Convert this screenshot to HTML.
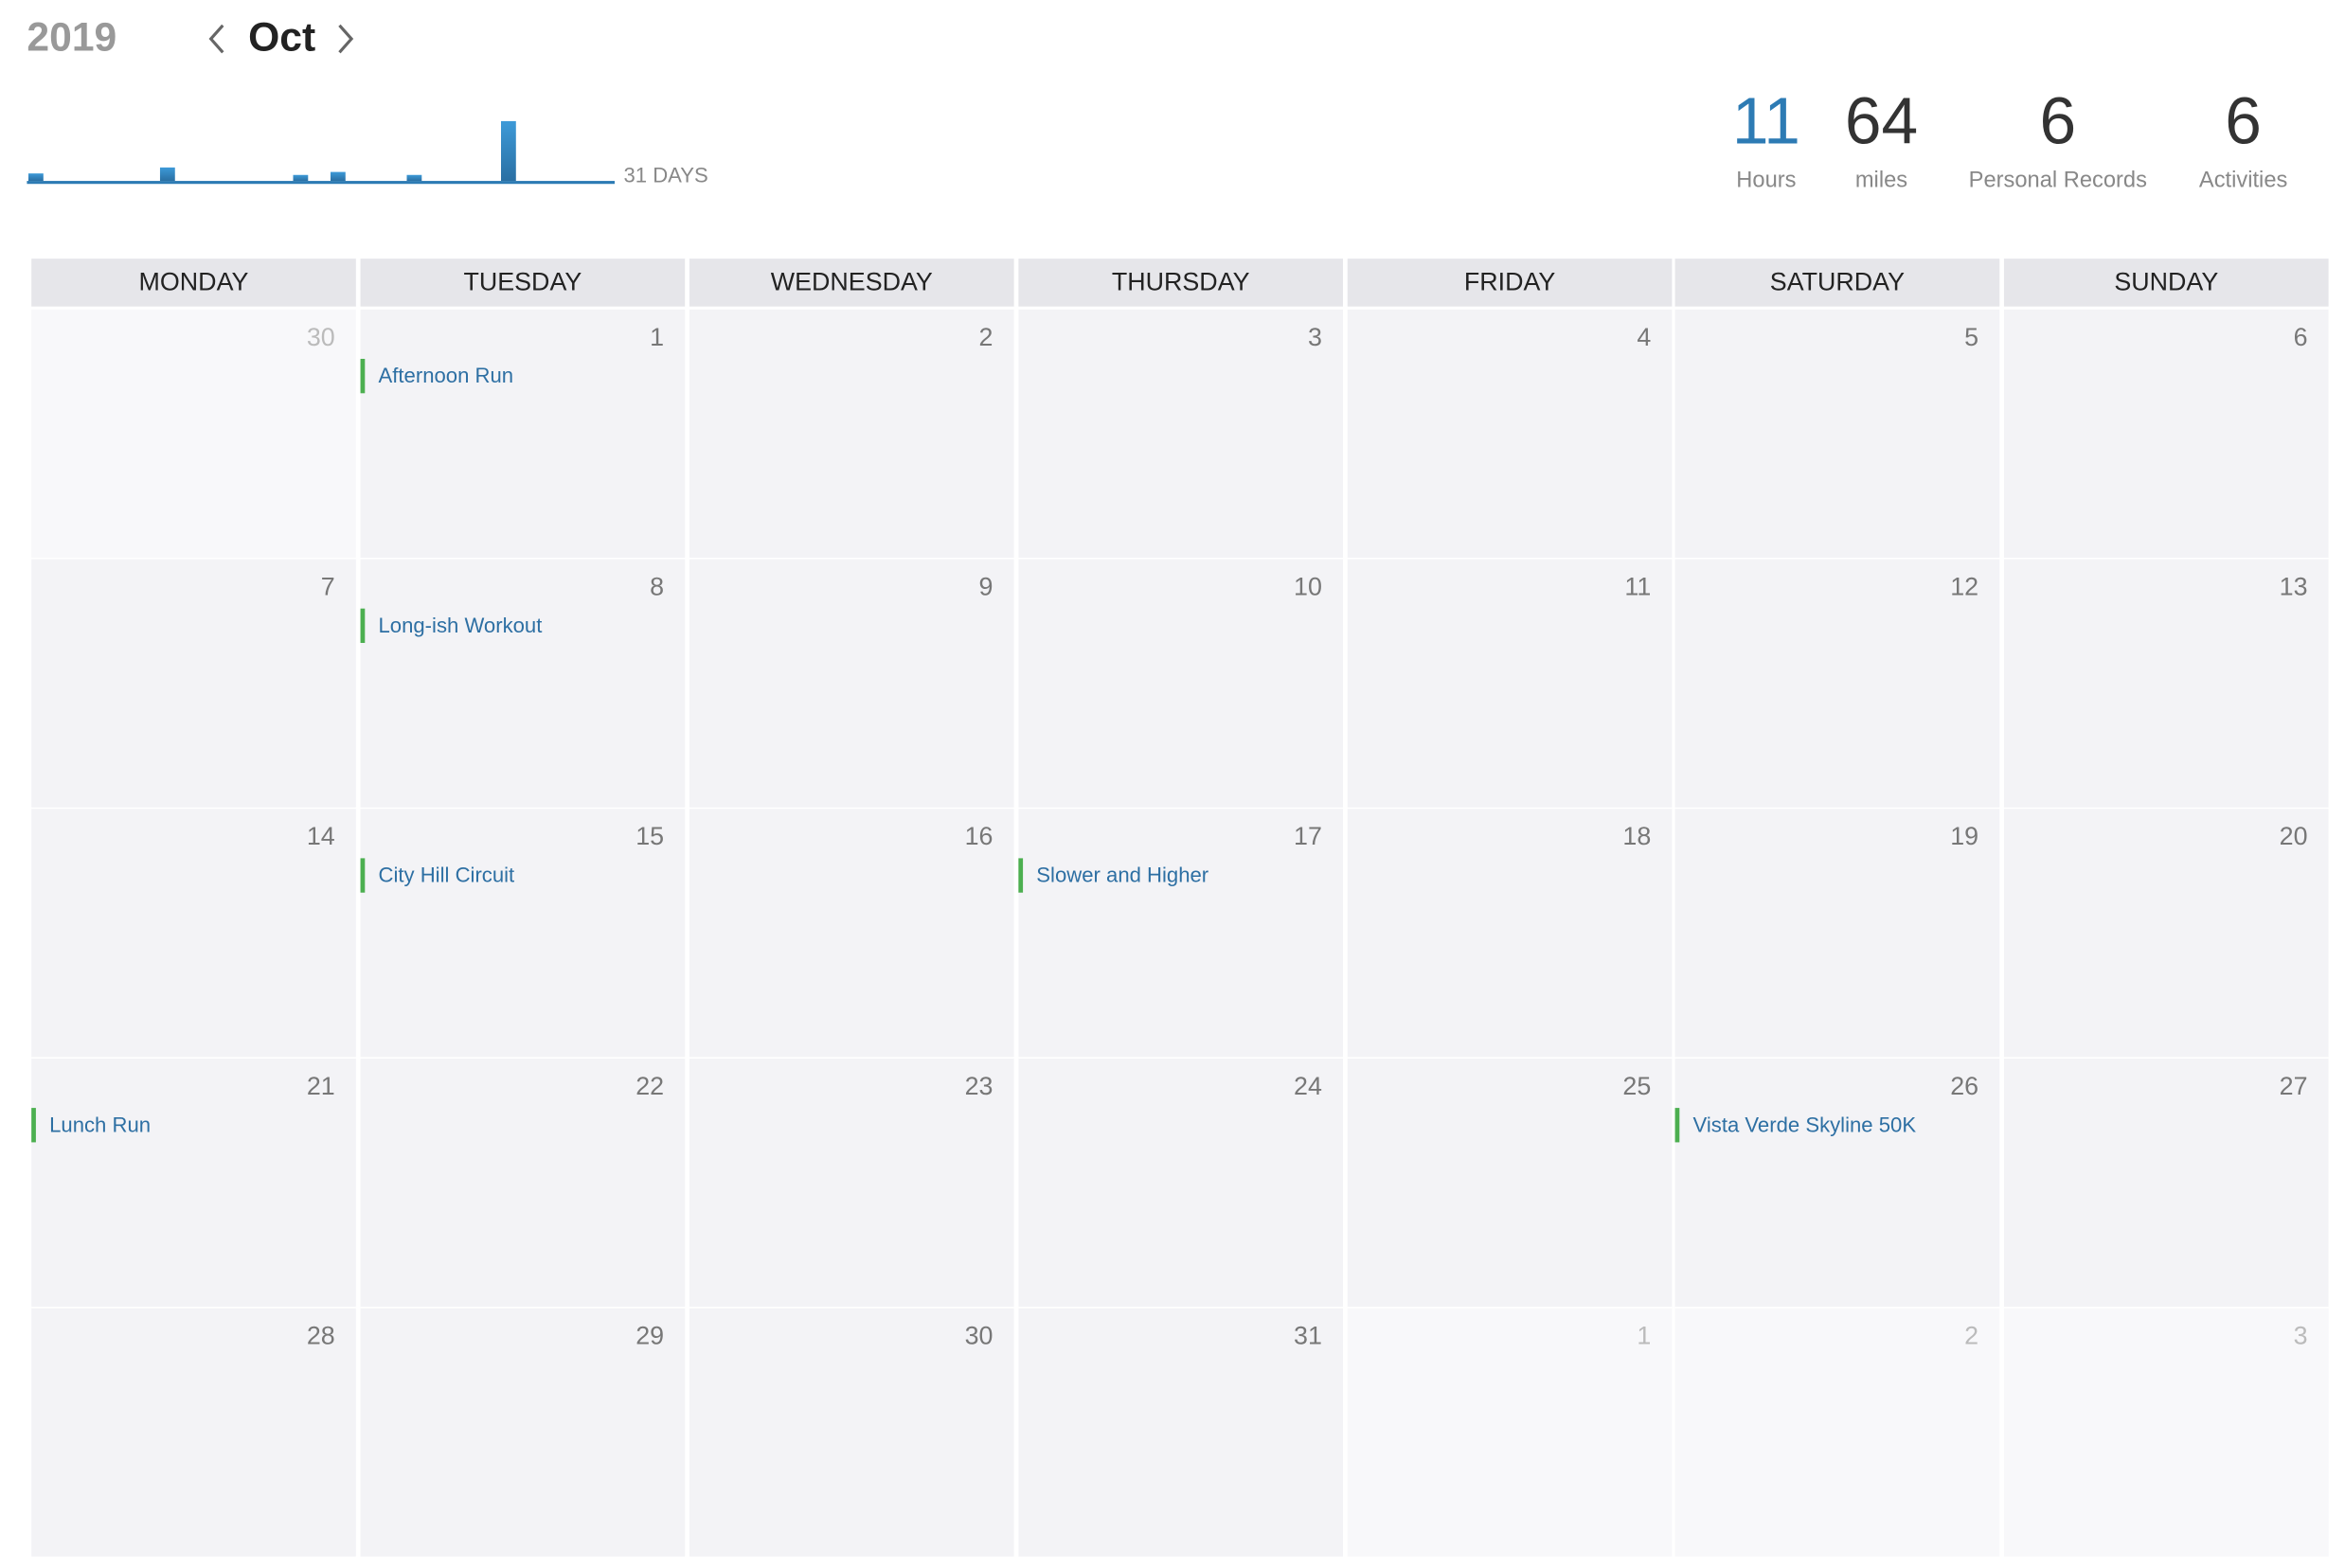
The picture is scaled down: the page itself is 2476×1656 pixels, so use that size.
<!DOCTYPE html>
<html><head><meta charset="utf-8"><style>
html,body{margin:0;padding:0;background:#fff;overflow:hidden}
body{width:2476px;height:1656px}
#w{position:absolute;left:0;top:0;width:1568px;height:1049px;transform:scale(1.57908);transform-origin:0 0;font-family:"Liberation Sans",sans-serif}
.a{position:absolute}
.hd{position:absolute;top:173px;height:32px;background:#e6e6ea;font-size:17px;color:#222;text-align:center;line-height:32px}
.c{position:absolute;height:166px;background:#f3f3f6}
.c.o{background:#f8f8fa}
.n{position:absolute;right:14px;top:9px;font-size:17px;color:#777}
.o .n{color:#bbb}
.ev{position:absolute;left:0;top:33px;height:23px;border-left:3px solid #4caf50;padding-left:9px;font-size:14px;color:#2d6fa3;line-height:23px;white-space:nowrap}
.bar{position:absolute;width:10px;background:linear-gradient(#3d9ad8,#2a6fa3)}
.big{position:absolute;top:57px;font-size:44px;color:#333;text-align:center;width:120px;font-weight:normal}
.lb{position:absolute;top:112px;font-size:15px;color:#888;text-align:center;width:160px}
</style></head><body><div id="w">
<div class="a" style="left:18px;top:10px;font-size:27px;font-weight:bold;color:#999">2019</div>
<svg class="a" style="left:138px;top:15px" width="14" height="22"><path d="M11 2 L3 11 L11 20" stroke="#666" stroke-width="2" fill="none"/></svg>
<div class="a" style="left:166px;top:10px;font-size:27px;font-weight:bold;color:#222">Oct</div>
<svg class="a" style="left:224px;top:15px" width="14" height="22"><path d="M3 2 L11 11 L3 20" stroke="#666" stroke-width="2" fill="none"/></svg>
<div class="a" style="left:18px;top:121px;width:393px;height:2px;background:#2d7bb4"></div>
<div class="bar" style="left:19px;top:116px;height:5px"></div>
<div class="bar" style="left:107px;top:112px;height:9px"></div>
<div class="bar" style="left:196px;top:117px;height:4px"></div>
<div class="bar" style="left:221px;top:115px;height:6px"></div>
<div class="bar" style="left:272px;top:117px;height:4px"></div>
<div class="bar" style="left:335px;top:81px;height:40px"></div>
<div class="a" style="left:417px;top:109px;font-size:14px;color:#888">31 DAYS</div>
<div class="big" style="left:1121px;color:#2d7bb4">11</div>
<div class="big" style="left:1198px">64</div>
<div class="big" style="left:1316px">6</div>
<div class="big" style="left:1440px">6</div>
<div class="lb" style="left:1101px">Hours</div>
<div class="lb" style="left:1178px">miles</div>
<div class="lb" style="left:1296px">Personal Records</div>
<div class="lb" style="left:1420px">Activities</div>
<div id="g"></div>
</div>
<script>
var L=[21,241,461,681,901,1120,1340],W=217,T=[207,374,541,708,875];
var days=["MONDAY","TUESDAY","WEDNESDAY","THURSDAY","FRIDAY","SATURDAY","SUNDAY"];
var h="";
for(var i=0;i<7;i++)h+='<div class="hd" style="left:'+L[i]+'px;width:'+W+'px">'+days[i]+'</div>';
var ev={1:"Afternoon Run",8:"Long-ish Workout",15:"City Hill Circuit",17:"Slower and Higher",21:"Lunch Run",26:"Vista Verde Skyline 50K"};
for(var r=0;r<5;r++)for(var c=0;c<7;c++){
 var d=r*7+c, o=false, num;
 if(d==0){num=30;o=true}else if(d>31){num=d-31;o=true}else num=d;
 h+='<div class="c'+(o?' o':'')+'" style="left:'+L[c]+'px;top:'+T[r]+'px;width:'+W+'px"><div class="n">'+num+'</div>'+(!o&&ev[num]?'<div class="ev">'+ev[num]+'</div>':'')+'</div>';
}
document.getElementById("g").innerHTML=h;
</script>
</body></html>
